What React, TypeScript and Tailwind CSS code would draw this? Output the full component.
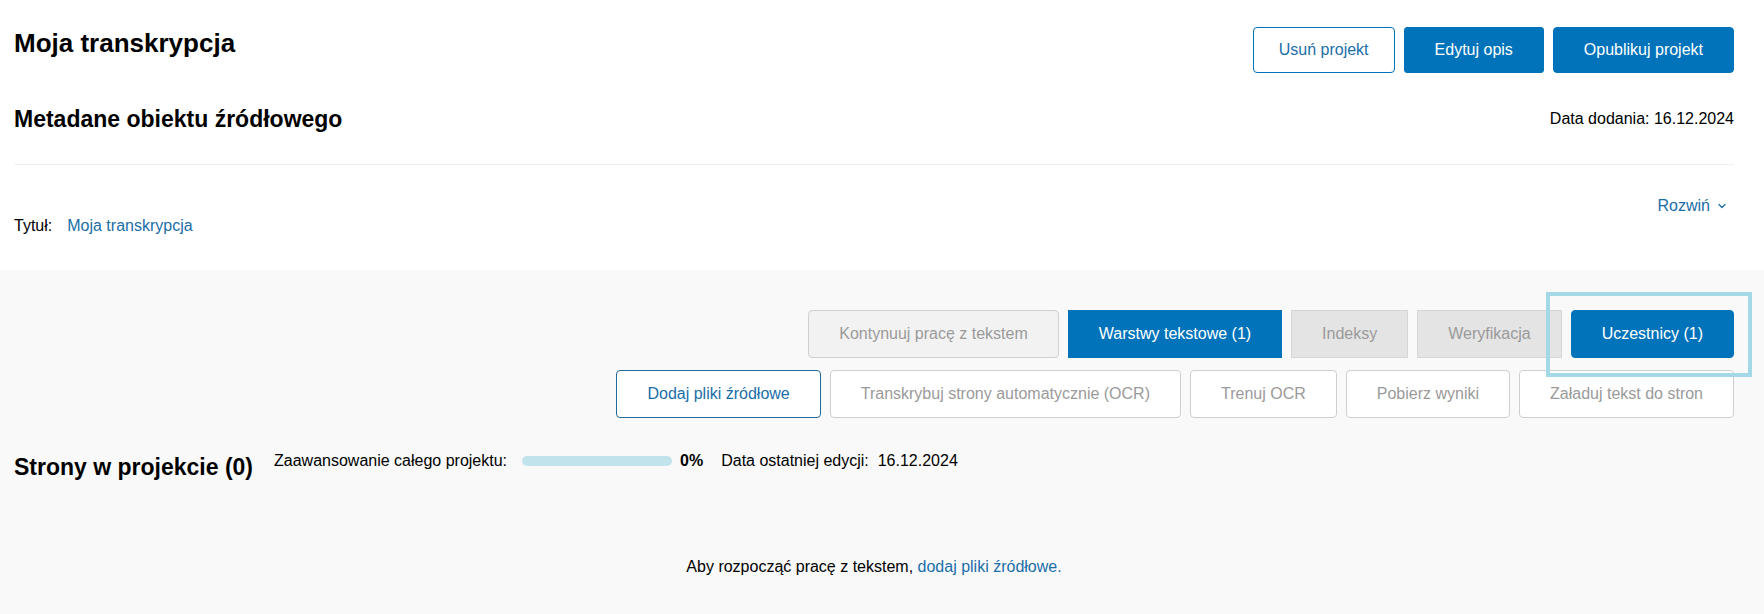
import { ChevronDown } from 'lucide-react'
import { FC, ReactNode } from 'react'

const blue = 'bg-[#0073ba] text-white border border-[#0073ba]'

const Btn: FC<{ className: string; children: ReactNode }> = ({ className, children }) => (
	<button type="button" className={`h-[48px] px-[30px] rounded-[4px] text-[16px] whitespace-nowrap ${className}`}>
		{children}
	</button>
)

const App: FC = () => {
	return (
		<div className="min-h-[614px] bg-[#f9f9f9] text-black font-['Liberation_Sans',Arial,sans-serif]">
			<section className="bg-white h-[270px] pl-[14px] pr-[30px] pt-[27px]">
				<div className="flex justify-between items-start">
					<h1 className="text-[26px] font-bold leading-[30px] mt-[1px]">Moja transkrypcja</h1>
					<div className="flex gap-[9px]">
						<button
							type="button"
							className="h-[46px] px-[25px] rounded-[4px] border border-[#0073ba] text-[#1a6ea8] bg-white text-[16px]"
						>
							Usuń projekt
						</button>
						<button type="button" className={`h-[46px] px-[30px] rounded-[3px] text-[16px] ${blue}`}>
							Edytuj opis
						</button>
						<button type="button" className={`h-[46px] px-[30px] rounded-[4px] text-[16px] ${blue}`}>
							Opublikuj projekt
						</button>
					</div>
				</div>
				<div className="flex justify-between items-center mt-[33px]">
					<h2 className="text-[23px] font-bold leading-[26px]">Metadane obiektu źródłowego</h2>
					<span className="text-[16px]">Data dodania: 16.12.2024</span>
				</div>
				<div className="border-t border-[#efefef] mt-[32px]" />
				<div className="flex justify-end mt-[32px] pr-[6px]">
					<span className="flex items-center gap-[6px] text-[16px] leading-[18px] text-[#1a6ea8]">
						Rozwiń
						<ChevronDown size={12} strokeWidth={2.5} />
					</span>
				</div>
				<div className="flex gap-[15px] mt-[2px] text-[16px] leading-[18px]">
					<span>Tytuł:</span>
					<span className="text-[#1a6ea8]">Moja transkrypcja</span>
				</div>
			</section>

			<section className="pl-[14px] pr-[30px] pt-[40px] pb-[30px]">
				<div className="flex justify-end gap-[9px]">
					<Btn className="bg-[#f2f2f2] border border-[#d0d0d0] text-[#9a9a9a]">Kontynuuj pracę z tekstem</Btn>
					<Btn className={`${blue} rounded-none`}>Warstwy tekstowe (1)</Btn>
					<Btn className="bg-[#e4e4e4] border border-[#d6d6d6] text-[#9a9a9a] rounded-none">Indeksy</Btn>
					<Btn className="bg-[#e4e4e4] border border-[#d6d6d6] text-[#9a9a9a] rounded-none">Weryfikacja</Btn>
					<div className="relative">
						<Btn className={blue}>Uczestnicy (1)</Btn>
						<div className="absolute -left-[25px] -right-[18px] -top-[18px] -bottom-[19px] border-[4px] border-[#a3d8e6] pointer-events-none" />
					</div>
				</div>
				<div className="flex justify-end gap-[9px] mt-[12px]">
					<Btn className="bg-white border border-[#1f6a9c] text-[#1a6ea8]">Dodaj pliki źródłowe</Btn>
					<Btn className="bg-white border border-[#cfcfcf] text-[#9a9a9a] rounded-[2px]">
						Transkrybuj strony automatycznie (OCR)
					</Btn>
					<Btn className="bg-white border border-[#cfcfcf] text-[#9a9a9a] rounded-[2px]">Trenuj OCR</Btn>
					<Btn className="bg-white border border-[#cfcfcf] text-[#9a9a9a] rounded-[2px]">Pobierz wyniki</Btn>
					<Btn className="bg-white border border-[#cfcfcf] text-[#9a9a9a]">Załaduj tekst do stron</Btn>
				</div>

				<div className="flex items-start mt-[34px]">
					<h3 className="text-[23px] font-bold leading-[26px] mt-[2px]">Strony w projekcie (0)</h3>
					<div className="flex items-center ml-[21px] text-[16px] leading-[18px]">
						<span>Zaawansowanie całego projektu:</span>
						<div className="w-[150px] h-[10px] rounded-full bg-[#c1e3ec] ml-[15px]" />
						<span className="font-bold ml-[8px]">0%</span>
						<span className="ml-[18px]">Data ostatniej edycji:&nbsp; 16.12.2024</span>
					</div>
				</div>

				<p className="text-center text-[16px] leading-[18px] mt-[78px]">
					Aby rozpocząć pracę z tekstem, <span className="text-[#1a6ea8]">dodaj pliki źródłowe.</span>
				</p>
			</section>
		</div>
	)
}

export default App
